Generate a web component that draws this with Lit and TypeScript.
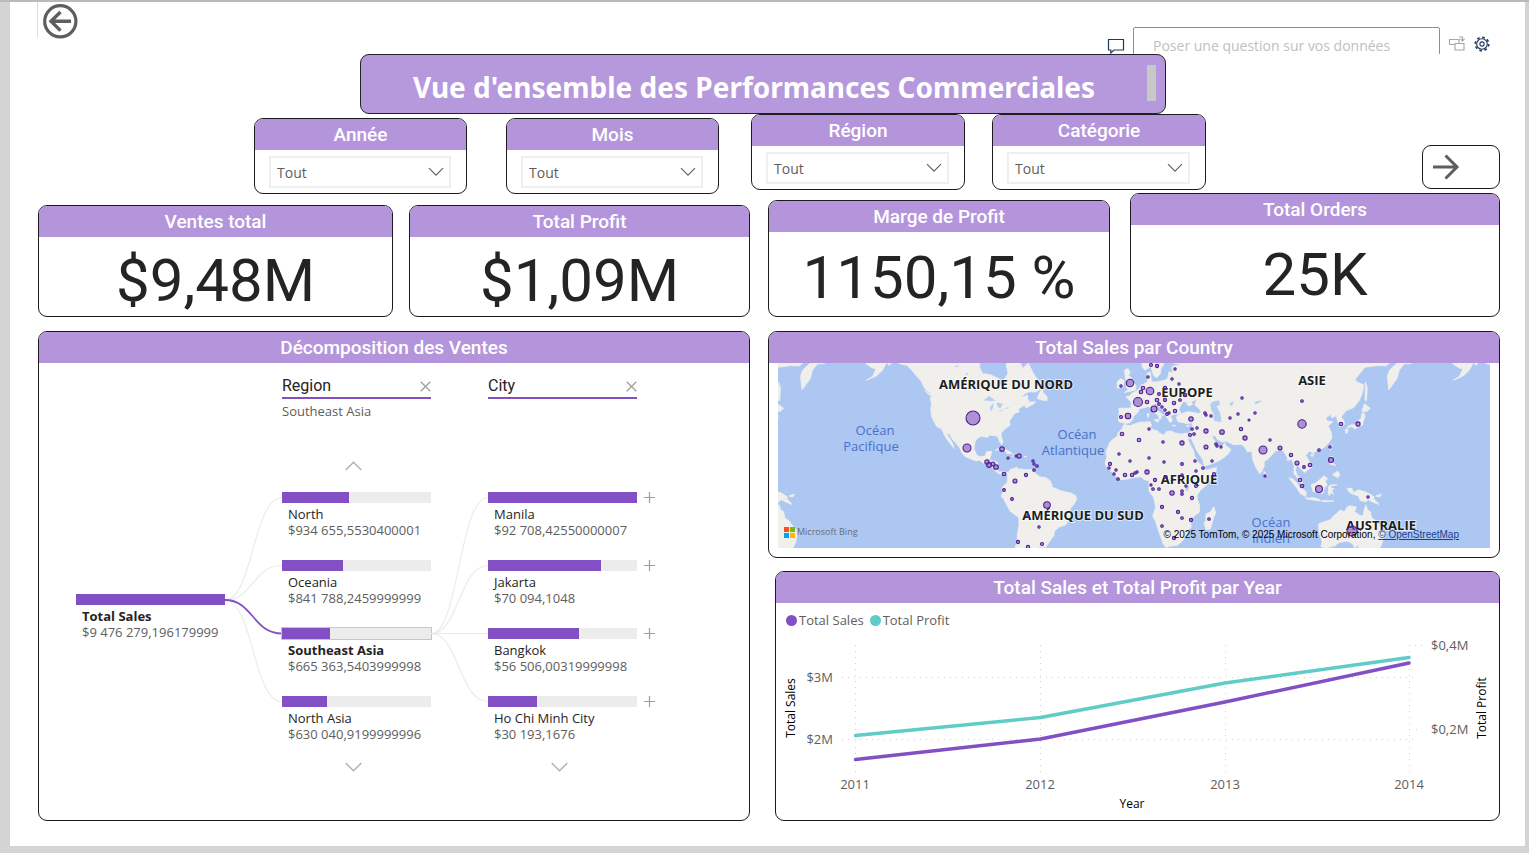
import { LitElement, html, svg, css } from "lit";
import { customElement } from "lit/decorators.js";
import { classMap } from "lit/directives/class-map.js";

type Point = [number, number];

/* Web Mercator, scaled so that one degree of longitude is 1.63 units. */
const DEG = 1.63;
const RADIUS = (DEG * 180) / Math.PI;
const project = ([lon, lat]: Point): string => {
  const m = Math.log(Math.tan(Math.PI / 4 + (lat * Math.PI) / 360));
  return `${(355.5 + DEG * lon).toFixed(1)},${(124 - RADIUS * m).toFixed(1)}`;
};
const outline = (points: Point[]): string => `M${points.map(project).join("L")}Z`;

const LAND: Point[][] = [
  // North and Central America
  [[-168, 68], [-162, 64], [-166, 61.5], [-164, 60], [-160, 58.7], [-158, 58.5], [-160, 56], [-164, 54.6], [-158, 56], [-154, 58], [-151.5, 60.5], [-150, 59.5], [-147, 61], [-143, 60], [-139, 59.6], [-136, 58], [-133, 56], [-130.5, 54.5], [-128, 51.5], [-124.5, 49.5], [-123, 48.5], [-124.6, 48], [-124, 45], [-124.4, 42.5], [-123.8, 39.5], [-122.4, 37.3], [-120.6, 34.6], [-118, 33.8], [-117, 32.3], [-115.8, 30], [-114.5, 28], [-112.2, 25.5], [-110, 23], [-110.5, 24.8], [-112, 27.6], [-114.7, 31.2], [-113, 31], [-111, 28], [-109, 26], [-106.5, 23.3], [-105.4, 20.5], [-103.5, 18.5], [-100, 17], [-96.5, 15.8], [-94.5, 16.2], [-92.2, 14.6], [-88, 13.1], [-86, 11.3], [-84.8, 9.8], [-83, 8.4], [-80.3, 7.4], [-79, 8.9], [-77.7, 7.8], [-77, 8.6], [-79.7, 9.5], [-82.3, 9], [-83.6, 11], [-83.4, 15], [-86, 15.9], [-88.5, 16], [-87.5, 19], [-87, 21.4], [-90.3, 21.1], [-91, 18.7], [-94.5, 18.2], [-96.4, 19.5], [-97.8, 22.5], [-97.3, 26.5], [-96, 28.5], [-93.5, 29.7], [-91, 29.3], [-89.2, 29.2], [-88.5, 30.3], [-85.5, 30], [-84, 30], [-82.8, 28.5], [-82, 26.5], [-81, 25.2], [-80.1, 26.5], [-81.3, 30.5], [-80.8, 32], [-78, 34], [-75.7, 35.4], [-76, 37.5], [-74, 40], [-73, 41.1], [-70, 41.8], [-70.8, 43], [-67, 44.8], [-65.8, 43.6], [-61, 45.5], [-60, 46.3], [-64, 46.1], [-65, 47.7], [-65, 49.1], [-69, 48], [-67, 49.5], [-64, 50.3], [-60, 50.2], [-56, 51.8], [-56, 53.5], [-59, 55], [-61.5, 57], [-64.5, 60.3], [-68, 58.6], [-70, 61], [-74, 62.2], [-77.5, 62.4], [-78, 59.5], [-77, 57], [-79.5, 54.7], [-79, 51.5], [-82, 52.9], [-82.3, 55.1], [-88, 56.6], [-92.5, 57], [-94.5, 59], [-94, 61], [-88, 64], [-86, 68]],
  [[-59.2, 47.7], [-55.8, 46.9], [-53, 46.8], [-53, 48.5], [-55.5, 50], [-56, 51.6], [-58, 49.5]],
  [[-128, 50.8], [-123.5, 48.4], [-125, 48.8]],
  [[-73, 68], [-74, 64.5], [-66, 62], [-65, 65], [-62, 67]],
  // Caribbean
  [[-84.8, 22], [-82, 23.1], [-79.5, 22.8], [-75.5, 21], [-74.3, 20.2], [-77.5, 19.9], [-78.5, 21.5], [-82, 22.4]],
  [[-74.3, 18.4], [-73, 19.9], [-70, 19.8], [-68.4, 18.6], [-71.5, 17.8]],
  [[-78.2, 18.3], [-76.3, 18.2], [-77.2, 17.8]],
  [[-67.2, 18.5], [-65.6, 18.4], [-66.8, 17.9]],
  // South America
  [[-77, 8.6], [-75.5, 10.8], [-73, 11.3], [-71.7, 12.3], [-71.3, 10.9], [-68.3, 11], [-66, 10.5], [-62, 10.7], [-60.5, 8.5], [-57.5, 6.2], [-54, 5.9], [-51.5, 4.3], [-50, 1.5], [-50, 0], [-48, -0.8], [-44.5, -2.3], [-41.5, -3], [-38.5, -3.7], [-35.5, -5.2], [-34.8, -7.5], [-36.5, -10.5], [-38.7, -13], [-39, -17], [-40.5, -21], [-42, -22.9], [-45, -23.6], [-48.5, -26], [-48.8, -28.5], [-51, -31], [-53.8, -34.5], [-57, -34.6], [-58.3, -34], [-57, -36.5], [-62, -39], [-65, -42], [-74, -42], [-73.5, -37], [-71.5, -32], [-71.3, -28], [-70.3, -23], [-70.3, -18.5], [-75.5, -14.8], [-77.2, -12], [-79.6, -7.5], [-81.2, -5.8], [-80.2, -3.2], [-80.8, -1], [-79.5, 1], [-77.5, 2.7], [-77.3, 6]],
  // Africa
  [[-6, 35.8], [-2, 35.1], [3, 36.8], [7, 37], [10.2, 37.2], [11, 35.5], [10.2, 33.8], [15, 32.4], [15.8, 31.3], [19, 30.3], [20.2, 32.3], [23, 32.4], [25.5, 31.5], [29, 30.9], [32.3, 31.3], [34.3, 31.2], [34.4, 28], [32.6, 29.8], [33.8, 27], [35.5, 24], [37, 21.5], [37.3, 19], [39.4, 15.3], [43.2, 12], [43.5, 11.2], [45, 10.5], [51, 11.9], [50.5, 9], [48, 4.5], [43.5, 0], [41, -2], [39, -5], [39.3, -8], [40.5, -11], [40.6, -15], [37, -17.7], [34.9, -20], [35.4, -24], [32.8, -26], [32.5, -28.5], [30, -31.3], [27, -33.6], [22, -34.1], [19.8, -34.8], [18.2, -32.8], [16.5, -28.7], [14.6, -24], [13.5, -20.5], [11.8, -17.5], [13.6, -12.3], [12.3, -6.2], [9.5, -2.5], [9.5, 2], [9.6, 4], [7, 4.3], [4.5, 6.3], [1, 5.9], [-3, 5], [-7.7, 4.4], [-11.5, 7], [-13.3, 9], [-15, 11], [-16.8, 12.5], [-17.4, 14.7], [-16.3, 18], [-17, 21], [-14.7, 26], [-13, 27.8], [-9.8, 29.8], [-9.6, 31.5], [-7, 33.7]],
  [[49.3, -12], [50.4, -15.6], [49.3, -18], [47.1, -25], [44.5, -25.3], [43.3, -22], [44.4, -19.8], [44.4, -16.3], [47, -15.3]],
  // Europe and Asia
  [[-1.7, 43.4], [-4, 43.5], [-9, 43.4], [-8.8, 41], [-9.4, 38.7], [-8.8, 37], [-6.3, 36.7], [-5.5, 36.1], [-2, 36.8], [-0.5, 38.2], [0, 39.7], [3.2, 41.9], [3.2, 43.1], [5, 43.4], [7.5, 43.8], [9, 44.4], [10.3, 43.3], [12.3, 41.7], [15.2, 40.1], [16, 38.1], [17.1, 39], [16.8, 40.4], [18.5, 40.1], [15.5, 41.9], [13.5, 43.6], [12.3, 45.2], [13.7, 45.6], [15, 44.5], [19, 42.2], [19.4, 40.3], [21.2, 38.2], [22.5, 36.6], [24, 37.8], [22.8, 39.5], [24, 40.6], [26.2, 40.8], [29, 41.2], [27.8, 42.8], [28.8, 44.5], [30.7, 46.4], [33.2, 46], [32.7, 45.3], [34, 44.4], [36.4, 45.2], [35.2, 46.3], [39, 47.2], [37.5, 45], [40, 43.4], [41.6, 42], [40, 41], [36, 41.6], [33, 42], [30, 41.1], [27, 40.4], [26.3, 39], [27.5, 37], [30.5, 36.7], [32.5, 36.1], [36, 36.7], [35.8, 34.5], [34.3, 31.2], [34.9, 29.5], [37, 25.5], [39, 21.5], [42.5, 16.5], [43.4, 12.7], [48, 14], [52.2, 15.8], [55.5, 17.8], [57.8, 19.5], [59.8, 22.5], [56.6, 24.5], [56.2, 26.2], [54.3, 24.2], [51.6, 24.3], [51.2, 26], [50.1, 26.8], [48, 30], [50.3, 29.8], [51.5, 27.9], [54.5, 26.6], [57, 27], [61.5, 25.1], [66.5, 25.3], [68.5, 23.3], [70, 21], [72.6, 21.6], [73, 17], [75, 12], [77.5, 8.1], [78.3, 9], [80.2, 12.5], [80.2, 15.5], [82.3, 16.8], [85.5, 19.8], [87, 21.5], [90.5, 22.2], [92, 21.5], [94.3, 18], [94.5, 15.9], [97, 16.9], [98.6, 13], [98.4, 8], [100.4, 6], [101.3, 3], [103.6, 1.4], [103.4, 4.7], [100.5, 7.2], [99.3, 10], [100, 13.3], [101, 12.7], [103, 10.8], [105, 8.7], [106.8, 10.5], [109.2, 11.8], [109, 14], [107, 16.8], [105.7, 19], [108, 21.5], [110.3, 20.4], [113.5, 22.2], [117, 23.6], [119.7, 26], [121.8, 29], [121.5, 31.5], [120, 34.2], [119.3, 35], [122.4, 37.2], [118.8, 37.5], [118, 39], [121.5, 40.8], [121.4, 39], [124.5, 40], [125, 37.9], [126.5, 34.5], [129.2, 35.4], [129.3, 37], [127.5, 39.5], [130.5, 42.4], [135, 43.7], [138.5, 46.8], [140.5, 50], [141.3, 53], [137, 54], [136, 55], [142, 59], [150, 59.5], [155, 59.4], [160, 61.5], [163, 62.3], [163, 61], [157, 58], [155.7, 56], [156.6, 51.1], [158.7, 52.8], [161.8, 55.3], [163, 58], [166, 60], [170, 60.1], [177, 62.4], [180, 65], [190, 66], [180, 70], [10, 70], [5, 62], [5.3, 59], [7.2, 58], [10.6, 59.3], [12.4, 56.2], [14.3, 55.5], [16.5, 57], [17, 58.7], [18.8, 60], [17.2, 61], [18, 63], [22, 65.6], [25, 65], [21.3, 62.7], [21.5, 60.9], [25, 60.2], [29.5, 59.9], [24, 59.3], [23.5, 58.6], [24.3, 57.3], [21.7, 57.5], [21, 55.2], [18.8, 54.6], [14, 54], [10.9, 54.1], [10.5, 57.5], [8.3, 57], [8.6, 54], [4.6, 52.8], [3.3, 51.4], [1.6, 50.6], [-1.3, 49.6], [-2, 48.7], [-4.7, 48.4], [-1.3, 46]],
  [[-5.5, 50], [1.2, 51], [1.6, 52.7], [-0.2, 54], [-1.8, 55.8], [-3, 56.2], [-2, 57.5], [-3.5, 58.6], [-5.5, 58], [-5, 55], [-3, 54], [-4.8, 52.2], [-3, 51.3]],
  [[-10, 51.7], [-6.3, 52.2], [-5.7, 54.6], [-8, 55.2], [-10, 54]],
  [[12.5, 38], [15.5, 38.2], [15, 36.8]],
  [[8.3, 41], [9.7, 40.8], [9, 39]],
  [[23.6, 35.4], [26.2, 35.2], [24.8, 34.9]],
  [[32.4, 35], [34.4, 35.5], [33.5, 34.7]],
  [[80, 9.7], [81.8, 7.2], [80.3, 6]],
  // Maritime Asia
  [[95.3, 5.6], [97.6, 5.1], [100.3, 2.5], [103.6, -1], [106, -3], [105.7, -5.8], [102.3, -4], [100.3, -0.8], [98, 2.2]],
  [[105.2, -6.7], [108.5, -6.7], [110.8, -6.5], [114.4, -7.8], [114.4, -8.6], [106.5, -7.4]],
  [[115, -8.3], [119, -8.4], [123, -8.5], [120, -9], [116, -8.9]],
  [[109, 1.5], [111.3, 2.2], [113.5, 3.8], [116.8, 6.9], [119, 5.2], [117.7, 3.5], [118.8, 1], [117.4, 0], [116, -4], [113, -3.2], [110.2, -2.8]],
  [[119.8, 0.5], [121, 1.2], [125, 1.5], [120.7, 0.4], [121.8, -0.9], [123.2, -1], [121.7, -2], [122.7, -4.8], [121, -3], [120.3, -5.5], [119.4, -3.5]],
  [[120.3, 16], [121, 18.5], [122.2, 18.3], [121.6, 15.7], [124, 13], [120.7, 13.8]],
  [[122, 7.5], [123.5, 8.5], [125.4, 9.7], [126.5, 7.5], [125.4, 5.7]],
  [[120.1, 23], [121.5, 25.2], [121.9, 24.8], [120.8, 22]],
  [[108.7, 19.4], [110.8, 20], [109.6, 18.2]],
  [[131, -0.8], [134, -0.8], [135, -3.3], [138, -1.7], [141, -2.6], [144.5, -3.9], [147.7, -6.2], [147.2, -7], [150.7, -10.6], [147.3, -9.5], [144, -7.7], [142.5, -9.2], [139, -8.1], [138, -5.6], [133.5, -4], [132, -2.8]],
  [[148.5, -5.6], [152, -4.3], [151, -6.1]],
  // Japan and Sakhalin
  [[130.9, 34.2], [133, 35.5], [135.8, 35.6], [137.2, 37.3], [139.6, 38.6], [140.2, 41.2], [141.5, 41.3], [142, 39.5], [140.8, 37], [140.7, 35.5], [138.5, 34.8], [135.8, 33.5], [134, 34.6]],
  [[129.8, 33.2], [131.7, 33.6], [131.2, 31.4], [130.3, 31.3]],
  [[140, 42], [141.7, 45.4], [145.3, 43.4], [143.2, 42]],
  [[142.3, 54], [143.4, 52], [143.2, 49], [143, 46.6], [142, 47]],
  // Australia
  [[113.7, -22], [113.6, -26], [115.7, -31.8], [115, -34.3], [118, -35], [123.8, -33.8], [126, -32.3], [131, -31.5], [134.3, -32.8], [136, -35], [138, -33.2], [138.3, -35.6], [141, -38.3], [147, -38.5], [150, -37], [152.8, -32], [153.5, -28], [153, -25.2], [150, -22.2], [148.5, -20.2], [146.2, -18.8], [145.3, -15], [143.6, -14], [142.5, -10.8], [141.6, -13.5], [140.8, -17.5], [139, -17.3], [135.6, -15], [136.8, -12.2], [132.6, -11.4], [130.8, -12.4], [129.5, -15], [126.8, -13.9], [124.5, -16.2], [122.3, -17.8], [121, -19.6], [117.5, -20.7]],
];

const LAKES: Point[][] = [
  [[47, 45.3], [49, 46.5], [52.5, 46.8], [53, 45], [51, 44.3], [53, 41.5], [53.8, 39], [53.8, 37], [50, 37.4], [49, 38.5], [49.4, 40.5], [47.6, 43]],
  [[58.5, 45.5], [61.5, 46.5], [60.5, 44.3]],
  [[-92, 46.8], [-88.5, 48.7], [-84.7, 46.7], [-87.5, 46.6]],
  [[-87.7, 42], [-88, 44], [-85.8, 45.8], [-86.4, 43.2]],
  [[-84, 45.8], [-80.2, 45.5], [-81.7, 43.3], [-83.4, 44.2]],
  [[-83.2, 41.6], [-79, 42.8], [-81, 42.6]],
  [[-79.6, 43.3], [-76.3, 44], [-77, 43.3]],
  [[-98.5, 53.5], [-96.3, 51], [-97.3, 50.6], [-99, 52.5]],
  [[31.8, 0.3], [34, 0.2], [33.5, -2.3], [32, -2.3]],
  [[104, 51.5], [107.5, 52.6], [109.8, 55.5], [108, 53]],
  [[74, 46], [76.5, 46.7], [79, 46.6], [75, 45.2]],
  [[30.5, 60.5], [32.5, 60.2], [32, 61.2]],
  [[34.5, 61.5], [36, 61], [35.5, 62.4]],
  [[-110, 61], [-114, 61.2], [-116, 61.9], [-111, 62.6]],
  [[-107, 59.2], [-110.5, 59], [-108, 59.6]],
  [[-102, 57.5], [-103.2, 56.3], [-101.7, 56.6]],
];

const WORLD = LAND.map(outline).join("");
const INLAND = LAKES.map(outline).join("");

const BUBBLES: [number, number, number][] = [
  [195, 55, 7], [189, 85, 4], [224, 86, 2.3], [230, 95, 1.2], [238, 93, 1.2], [241, 93, 2.2], [209, 99, 2.2], [211, 102, 2.4], [215, 101, 2], [218, 104, 2.3], [226, 111, 1.8], [237, 118, 2], [248, 112, 1.6], [226, 127, 1.4], [234, 136, 1.4], [240, 179, 1.6], [250, 184, 1.6],
  [352, 20, 3.7], [343, 23, 1.2], [373, 2, 1.5], [379, 3, 1.6], [397, 6, 1.2], [370, 14, 1.2], [394, 16, 1.2], [401, 21, 1.2], [365, 25, 1.8], [363, 29, 1.8], [372, 28, 3.8], [360, 39, 4.5], [369, 39, 1.8], [387, 25, 1.6], [381, 31, 1.4], [379, 37, 1.8], [381, 41, 1.4], [384, 44, 1.2], [387, 37, 1.6], [387, 47, 1.2], [396, 40, 1.7], [402, 37, 1.3], [407, 32, 1.8], [397, 48, 1.7], [389, 51, 1.4], [391, 50, 1.2], [376, 46, 3], [350, 53, 2.8], [343, 54, 1.5], [413, 56, 2.2], [427, 50, 1.3], [428, 52, 1.2], [433, 53, 1.2], [452, 55, 1.2], [460, 51, 1.2], [464, 35, 1.2],
  [344, 71, 1.8], [361, 77, 1.8], [371, 66, 1.2], [385, 79, 1.2], [404, 80, 2.1], [414, 66, 1.3], [419, 65, 1.2], [428, 68, 2.1], [412, 72, 1.5], [416, 71, 1.3], [444, 69, 2.3], [463, 66, 1.7], [467, 75, 2.1], [471, 57, 1], [428, 84, 2], [438, 81, 1.3], [439, 83, 1.2], [443, 84, 1.1], [434, 98, 1.2], [417, 98, 1.2], [404, 101, 1.4], [386, 99, 1.2], [371, 95, 1.2], [352, 98, 1.2], [341, 91, 1.2], [332, 101, 1.6], [331, 105, 1.2], [338, 107, 1.2], [336, 111, 1.2], [340, 116, 1.3], [347, 112, 1.7], [354, 112, 1.7], [357, 110, 1.3], [359, 109, 1.2], [369, 109, 2.1], [377, 117, 1.6], [373, 122, 1.1], [375, 126, 1.3], [381, 126, 1.3], [394, 130, 2.2], [404, 128, 1.3], [404, 131, 1.3], [408, 123, 1.2], [418, 123, 1.5], [418, 108, 1.2], [425, 105, 1.3], [436, 111, 1.5], [404, 112, 1.2], [388, 114, 1.3], [414, 135, 1.6], [384, 144, 1.6], [400, 149, 1.6], [404, 155, 1.3], [413, 157, 1.6], [431, 156, 1.3], [384, 163, 1.3], [396, 175, 1.6],
  [255, 98, 1.2], [256, 101, 1.2], [259, 103, 1.3], [256, 107, 1.3], [269, 142, 3.3], [250, 153, 1.3], [261, 164, 1.2], [264, 181, 1.5],
  [524, 38, 1.3], [524, 61, 4.2], [477, 50, 1.2], [492, 77, 1.2], [485, 87, 4], [502, 85, 2], [513, 92, 1.7], [487, 113, 1.1], [519, 100, 2], [526, 104, 1.4], [532, 102, 1.8], [541, 87, 1.3], [552, 84, 1.2], [553, 97, 2.5], [563, 61, 1.8], [580, 61, 2.1], [522, 117, 1.8], [524, 123, 1.8], [541, 126, 3.5], [590, 134, 1.2], [574, 168, 5],
];

interface Node {
  name: string;
  value: string;
  share: number;
  selected?: boolean;
}

const TOTAL: Node = { name: "Total Sales", value: "$9 476 279,196179999", share: 100, selected: true };
const REGIONS: Node[] = [
  { name: "North", value: "$934 655,5530400001", share: 45 },
  { name: "Oceania", value: "$841 788,2459999999", share: 41 },
  { name: "Southeast Asia", value: "$665 363,5403999998", share: 32, selected: true },
  { name: "North Asia", value: "$630 040,9199999996", share: 30 },
];
const CITIES: Node[] = [
  { name: "Manila", value: "$92 708,42550000007", share: 100 },
  { name: "Jakarta", value: "$70 094,1048", share: 76 },
  { name: "Bangkok", value: "$56 506,00319999998", share: 61 },
  { name: "Ho Chi Minh City", value: "$30 193,1676", share: 33 },
];

@customElement("app-root")
export class AppRoot extends LitElement {
  static styles = css`
    :host {
      display: block;
      min-height: 100vh;
      box-sizing: border-box;
      padding: 0 4px 7px 10px;
      border-top: 2px solid #b9bab9;
      background: #d4d4d6;
      color: #252423;
      font-family: "Open Sans", "Noto Sans", sans-serif;
      font-size: 13px;
    }
    * { box-sizing: border-box; }
    h1, h2, h3, p { margin: 0; }
    button { padding: 0; border: 0; background: none; cursor: pointer; font: inherit; }
    svg { display: block; }
    .canvas { background: #fff; padding: 0 25px 25px 27px; }

    .top { display: flex; justify-content: space-between; height: 52px; overflow: hidden; }
    .back { height: 35px; padding: 2px 0 0 5px; border-left: 1px solid #dcdcdc; }
    .ask { display: flex; align-items: flex-start; padding: 25px 10px 0 0; }
    .ask .note { margin: 11px 8px 0 0; }
    .ask input {
      width: 307px; height: 36px; padding: 0 19px;
      border: 1px solid #8f8f8f; border-radius: 2px; background: #fff;
      font: 14px "Open Sans", sans-serif; color: #605e5c;
    }
    .ask input::placeholder { color: #c0c0c0; opacity: 1; }
    .ask .tool { margin: 8px 0 0 8px; }

    .banner-row { display: grid; grid-template-columns: 322fr 806fr 334fr; padding-left: 1px; }
    .banner {
      grid-column: 2; display: flex; align-items: center; height: 60px; padding-right: 9px;
      border: 1px solid #222; border-radius: 9px; background: #b699dd;
    }
    .banner h1 { flex: 1; padding-top: 5px; text-align: center; color: #fff; font: 700 28px/36px "Noto Sans", sans-serif; white-space: nowrap; }
    .thumb { width: 9px; height: 36px; margin-bottom: 3px; background: #c8c8c8; }

    .filters { display: grid; grid-template-columns: 216fr 465fr 32fr 455fr 216fr 78fr; height: 79px; padding-left: 1px; }
    .pair { display: grid; grid-template-columns: 1fr 1fr; align-items: start; }
    .pair.first { grid-column: 2; gap: 39px; padding-top: 4px; }
    .pair.second { grid-column: 4; gap: 27px; }

    .card { display: flex; flex-direction: column; border: 1px solid #1b1b1b; border-radius: 9px; background: #fff; overflow: hidden; min-width: 0; }
    .card > h2, .card > label {
      display: block; height: 31px; background: #b495dc; color: #fff; text-align: center;
      font: 500 19px/31px Roboto, sans-serif;
    }
    .slicer { height: 76px; }
    .field { position: relative; margin: 6px 15px 0 14px; }
    .field select {
      display: block; width: 100%; height: 32px; padding: 0 6px; appearance: none;
      border: 2px solid #efefef; border-radius: 0; background: #fff; color: #605e5c;
      font: 14px "Open Sans", sans-serif;
    }
    .field svg { position: absolute; right: 7px; top: 11px; pointer-events: none; }
    .next { grid-column: 6; align-self: end; height: 44px; margin-bottom: 5px; padding-left: 9px; border: 1px solid #1b1b1b; border-radius: 9px; background: #fff; }

    .halves { display: grid; grid-template-columns: 712fr 732fr; gap: 18px; padding-left: 1px; }
    .kpis { display: grid; align-items: end; }
    .kpis.left { grid-template-columns: 355fr 341fr; gap: 16px; }
    .kpis.right { grid-template-columns: 342fr 370fr; gap: 20px; }
    .kpi { height: 112px; }
    .kpi.mid { height: 117px; }
    .kpi.tall { height: 124px; }
    .kpi p { flex: 1; display: flex; align-items: center; justify-content: center; padding-top: 8px; font: 400 60px/64px Roboto, sans-serif; white-space: nowrap; }
    .main { padding-top: 14px; }
    .stack { display: flex; flex-direction: column; gap: 13px; }

    .tree { display: grid; grid-template-columns: 37fr 149fr 57fr 149fr 57fr 149fr 112fr; height: 457px; }
    .root { grid-column: 2; padding-top: 231px; }
    .links { width: 100%; height: 246px; margin-top: 129px; overflow: visible; }
    .level { display: flex; flex-direction: column; min-width: 0; }
    .level-head { display: flex; justify-content: space-between; align-items: center; height: 36px; padding-top: 11px; border-bottom: 2px solid #8250c4; }
    .level-head h3 { font: 400 16px/20px Roboto, sans-serif; }
    .level-head button { padding-top: 2px; }
    .chosen { height: 59px; padding-top: 2px; color: #605e5c; line-height: 20px; }
    .scroll { display: flex; justify-content: center; align-items: center; width: 100%; height: 16px; padding-right: 7px; }
    .scroll.hidden { visibility: hidden; }
    .nodes { display: grid; gap: 22px; margin: 18px 0 17px; }
    .node { display: block; height: 46px; white-space: nowrap; }
    .track { height: 11px; margin-bottom: 3px; background: #ececec; }
    .level .selected .track { box-shadow: 0 0 0 1px #c8c6c4; }
    .fill { height: 100%; background: #8250c4; }
    .name, .value { display: block; padding-left: 6px; line-height: 16px; }
    .selected .name { font-weight: 700; }
    .value { color: #605e5c; }
    .expanders { display: grid; gap: 57px; align-content: start; padding: 129px 0 0 7px; }
    .expanders button { width: 11px; height: 11px; }

    .map { position: relative; height: 185px; margin: 0 9px; overflow: hidden; }
    .map-card { height: 227px; }
    .world { width: 100%; height: 100%; }
    .continent { font: 700 13px "Open Sans", sans-serif; fill: #1d1d1d; stroke: #fff; stroke-width: 2px; stroke-opacity: 0.6; paint-order: stroke; text-anchor: middle; }
    .ocean { font: 13px "Open Sans", sans-serif; fill: #4a70cc; text-anchor: middle; }
    .bing { position: absolute; left: 6px; bottom: 10px; display: flex; align-items: center; gap: 2px; font-size: 9px; line-height: 12px; color: #6a6d72; }
    .credits { position: absolute; right: 31px; bottom: 7px; font: 10px/12px "Liberation Sans", Arial, sans-serif; color: #000; white-space: nowrap; }
    .credits a { color: #1a3f8f; }

    .chart-card { margin-left: 7px; height: 250px; }
    .legend { display: flex; gap: 6px; height: 18px; margin: 8px 0 0 10px; padding: 0; list-style: none; color: #605e5c; line-height: 18px; }
    .legend li { display: flex; align-items: center; gap: 2px; }
    .dot { width: 11px; height: 11px; border-radius: 50%; background: #8250c4; }
    .dot.profit { background: #5fccc8; }
    .plot { width: 100%; height: auto; }
    .tick { font: 13px "Open Sans", sans-serif; fill: #605e5c; }
    .axis { font: 12px "Open Sans", sans-serif; fill: #000; text-anchor: middle; }
    .mid-text { text-anchor: middle; }
    .end-text { text-anchor: end; }
    .grid { fill: none; stroke: #d2d0ce; stroke-width: 1; stroke-dasharray: 1 5; }
    .line { fill: none; stroke: #8250c4; stroke-width: 3.4; stroke-linejoin: round; stroke-linecap: round; }
    .line.profit { stroke: #5fccc8; }
  `;

  private slicer(id: string, label: string) {
    return html`<div class="card slicer">
      <label for=${id}>${label}</label>
      <div class="field">
        <select id=${id}><option>Tout</option></select>
        <svg width="16" height="10" viewBox="0 0 16 10" fill="none" stroke="#605e5c" stroke-width="1.1"><path d="M1 1.2 8 8.2 15 1.2" /></svg>
      </div>
    </div>`;
  }

  private kpi(label: string, value: string, size = "") {
    return html`<section class="card kpi ${size}"><h2>${label}</h2><p>${value}</p></section>`;
  }

  private node(n: Node) {
    return html`<div class=${classMap({ node: true, selected: !!n.selected })}>
      <div class="track"><div class="fill" style="width:${n.share}%"></div></div>
      <span class="name">${n.name}</span>
      <span class="value">${n.value}</span>
    </div>`;
  }

  private level(title: string, chosen: string, nodes: Node[], canScrollUp: boolean) {
    return html`<div class="level">
      <div class="level-head">
        <h3>${title}</h3>
        <button aria-label="Supprimer ${title}">
          <svg width="11" height="11" viewBox="0 0 11 11" stroke="#a19f9d" stroke-width="1.3"><path d="M.7.7l9.6 9.6M10.3.7.7 10.3" /></svg>
        </button>
      </div>
      <p class="chosen">${chosen}</p>
      <button class=${classMap({ scroll: true, hidden: !canScrollUp })} aria-label="Précédent">
        <svg width="17" height="10" viewBox="0 0 17 10" fill="none" stroke="#b3b0ad" stroke-width="1.4"><path d="M.7 9 8.5 1.2 16.3 9" /></svg>
      </button>
      <div class="nodes">${nodes.map((n) => this.node(n))}</div>
      <button class="scroll" aria-label="Suivant">
        <svg width="17" height="10" viewBox="0 0 17 10" fill="none" stroke="#b3b0ad" stroke-width="1.4"><path d="M.7 1 8.5 8.8 16.3 1" /></svg>
      </button>
    </div>`;
  }

  private links(from: number, active: number) {
    const order = [0, 1, 2, 3].sort((a, b) => Number(a === active) - Number(b === active));
    return html`<svg class="links" viewBox="0 0 57 246" preserveAspectRatio="none" fill="none">
      ${order.map((i) => {
        const to = 5.5 + 68 * i;
        const on = i === active;
        return svg`<path d="M0 ${from}C28 ${from} 28 ${to} 57 ${to}" stroke=${on ? "#8250c4" : "#ebebeb"}
          stroke-width=${on ? 1.8 : 1.2} vector-effect="non-scaling-stroke" />`;
      })}
    </svg>`;
  }

  private map() {
    const label = (cls: string, x: number, y: number, text: string) =>
      svg`<text class=${cls} x=${x} y=${y}>${text}</text>`;
    return html`<div class="map">
      <svg class="world" viewBox="0 0 712 185" preserveAspectRatio="xMidYMid slice" role="img" aria-label="Total Sales par Country">
        <rect width="712" height="185" fill="#abc7f2" />
        ${[-360, 0, 360].map(
          (turn) => svg`<g transform="translate(${turn * DEG} 0)">
            <path d=${WORLD} fill="#f0efeb" stroke="#f0efeb" stroke-width=".8" stroke-linejoin="round" />
            <path d=${INLAND} fill="#b5cdf2" />
          </g>`
        )}
        ${label("ocean", 97, 72, "Océan")}${label("ocean", 93, 88, "Pacifique")}
        ${label("ocean", 299, 76, "Océan")}${label("ocean", 295, 92, "Atlantique")}
        ${label("ocean", 493, 164, "Océan")}${label("ocean", 493, 180, "Indien")}
        ${label("continent", 228, 26, "AMÉRIQUE DU NORD")}
        ${label("continent", 305, 157, "AMÉRIQUE DU SUD")}
        ${label("continent", 409, 34, "EUROPE")}
        ${label("continent", 411, 121, "AFRIQUE")}
        ${label("continent", 534, 22, "ASIE")}
        ${label("continent", 603, 167, "AUSTRALIE")}
        <g fill="#8250c4" fill-opacity=".6" stroke="#4b1e93" stroke-width="1.1">
          ${BUBBLES.map(([x, y, r]) => svg`<circle cx=${x} cy=${y} r=${r} />`)}
        </g>
      </svg>
      <div class="bing">
        <svg width="11" height="11" viewBox="0 0 11 11">
          <path fill="#f25022" d="M0 0h5v5H0z" /><path fill="#7fba00" d="M6 0h5v5H6z" />
          <path fill="#00a4ef" d="M0 6h5v5H0z" /><path fill="#ffb900" d="M6 6h5v5H6z" />
        </svg>
        <span>Microsoft Bing</span>
      </div>
      <div class="credits">© 2025 TomTom, © 2025 Microsoft Corporation, <a href="#osm">© OpenStreetMap</a></div>
    </div>`;
  }

  private chart() {
    const years: [number, string][] = [[79, "2011"], [264, "2012"], [449, "2013"], [633, "2014"]];
    return html`<ul class="legend">
        <li><span class="dot"></span>Total Sales</li>
        <li><span class="dot profit"></span>Total Profit</li>
      </ul>
      <svg class="plot" viewBox="0 26 723 190" role="img" aria-label="Total Sales et Total Profit par Year">
        <path class="grid" d="M66 74.5H640M66 136.5H640M633 42.5H646M640 126.5H646" />
        ${years.map(([x]) => svg`<path class="grid" d="M${x + 0.5} 42V170" />`)}
        <path class="line profit" d="M79.5 132.5 264.5 114.5 449 80 633 54.5" />
        <path class="line" d="M79.5 156.5 264.5 136 449 99 633 60" />
        ${years.map(([x, y]) => svg`<text class="tick mid-text" x=${x} y="186">${y}</text>`)}
        <text class="tick end-text" x="57" y="79">$3M</text>
        <text class="tick end-text" x="57" y="141">$2M</text>
        <text class="tick" x="655" y="47">$0,4M</text>
        <text class="tick" x="655" y="131">$0,2M</text>
        <text class="axis" x="356" y="205">Year</text>
        <text class="axis" transform="translate(19 105) rotate(-90)">Total Sales</text>
        <text class="axis" transform="translate(710 105) rotate(-90)">Total Profit</text>
      </svg>`;
  }

  render() {
    return html`<main class="canvas">
      <header class="top">
        <div class="back">
          <button aria-label="Retour">
            <svg width="35" height="35" viewBox="0 0 35 35" fill="none" stroke="#605e5c">
              <circle cx="17.3" cy="17.3" r="15.6" stroke-width="3.2" />
              <path d="M28 17.3H8M17.5 8 8 17.3 17.5 26.6" stroke-width="3.4" />
            </svg>
          </button>
        </div>
        <div class="ask">
          <button class="note" aria-label="Commentaire">
            <svg width="18" height="16" viewBox="0 0 18 16" fill="none" stroke="#1e3a5c" stroke-width="1.2"><path d="M1.5 1.5h15v10.5H7L3.8 15v-3H1.5z" /></svg>
          </button>
          <input type="text" aria-label="Poser une question" placeholder="Poser une question sur vos données" />
          <button class="tool" aria-label="Convertir">
            <svg width="18" height="18" viewBox="0 0 18 18" fill="none" stroke="#a8a6a4" stroke-width="1.1"><path d="M6.500 9.500H1.500V4.500h9.500V8M7 8.500h9v6.500H7zM14.500 6V2H11M12.500 4l2 2 2-2" /></svg>
          </button>
          <button class="tool" aria-label="Paramètres">
            <svg width="16" height="18" viewBox="0 0 16 18" fill="none" stroke="#1e3a5c">
              <circle cx="8" cy="9" r="5.300" stroke-width="1.1" />
              <circle cx="8" cy="9" r="6.700" stroke-width="1.700" stroke-dasharray="2.600 2.660" />
              <circle cx="8" cy="9" r="2.100" stroke-width="1.1" />
            </svg>
          </button>
        </div>
      </header>

      <div class="banner-row">
        <div class="banner">
          <h1>Vue d'ensemble des Performances Commerciales</h1>
          <div class="thumb"></div>
        </div>
      </div>

      <div class="filters">
        <div class="pair first">${this.slicer("annee", "Année")}${this.slicer("mois", "Mois")}</div>
        <div class="pair second">${this.slicer("region", "Région")}${this.slicer("categorie", "Catégorie")}</div>
        <button class="next" aria-label="Page suivante">
          <svg width="28" height="28" viewBox="0 0 28 28" fill="none" stroke="#605e5c" stroke-width="3"><path d="M1 14h23M13.500 2.500 25 14 13.500 25.500" /></svg>
        </button>
      </div>

      <div class="halves">
        <div class="kpis left">${this.kpi("Ventes total", "$9,48M")}${this.kpi("Total Profit", "$1,09M")}</div>
        <div class="kpis right">${this.kpi("Marge de Profit", "1150,15 %", "mid")}${this.kpi("Total Orders", "25K", "tall")}</div>
      </div>

      <div class="halves main">
        <section class="card">
          <h2>Décomposition des Ventes</h2>
          <div class="tree">
            <div class="root">${this.node(TOTAL)}</div>
            ${this.links(108, 2)}
            ${this.level("Region", "Southeast Asia", REGIONS, true)}
            ${this.links(141.5, -1)}
            ${this.level("City", "", CITIES, false)}
            <div class="expanders">
              ${CITIES.map(
                (c) => html`<button aria-label="Développer ${c.name}">
                  <svg width="11" height="11" viewBox="0 0 11 11" stroke="#a19f9d" stroke-width="1.2"><path d="M5.500 0v11M0 5.500h11" /></svg>
                </button>`
              )}
            </div>
          </div>
        </section>
        <div class="stack">
          <section class="card map-card"><h2>Total Sales par Country</h2>${this.map()}</section>
          <section class="card chart-card"><h2>Total Sales et Total Profit par Year</h2>${this.chart()}</section>
        </div>
      </div>
    </main>`;
  }
}
